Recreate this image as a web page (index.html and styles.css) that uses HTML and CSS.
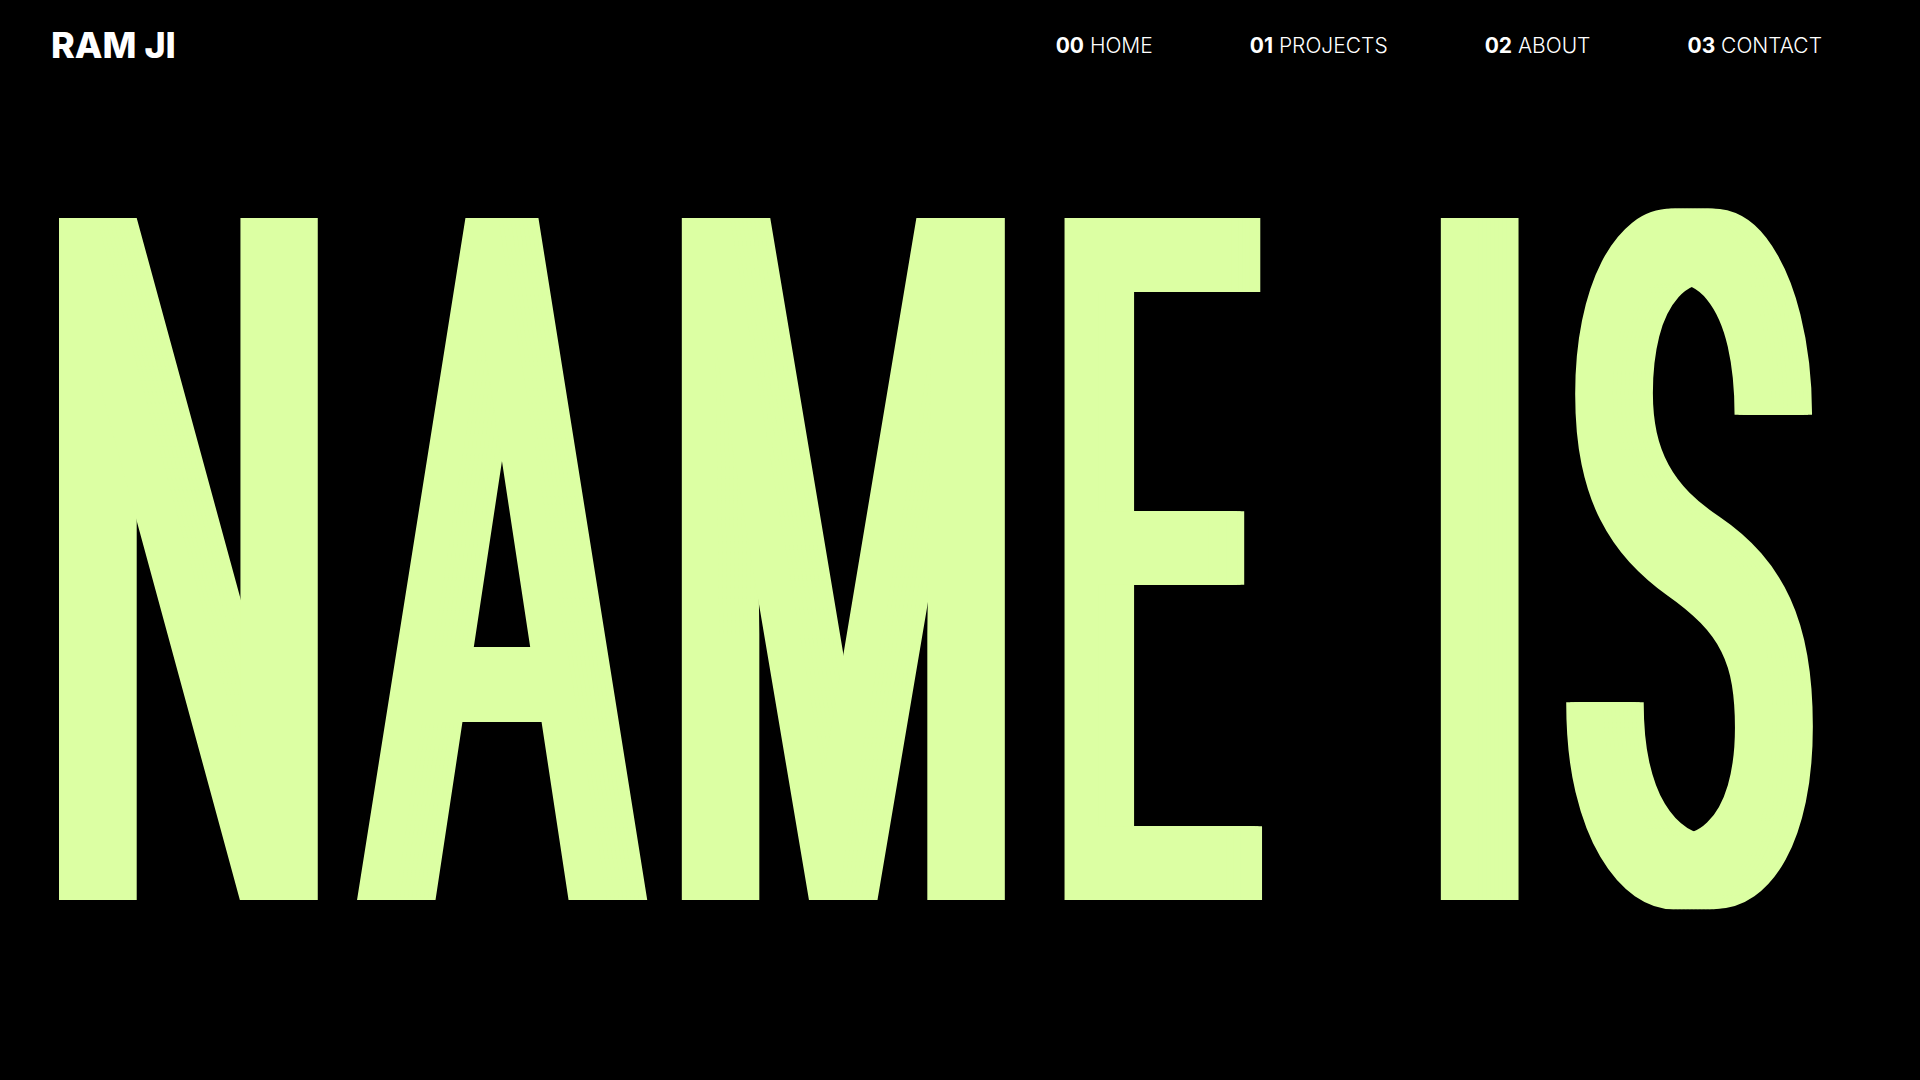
FILE: index.html
```html
<!DOCTYPE html>
<html lang="en">
<head>
<meta charset="utf-8">
<title>Ram Ji</title>
<link rel="stylesheet" href="styles.css">
</head>
<body>
<header class="topbar">
  <a class="logo" href="#">RAM JI</a>
  <nav class="nav">
    <a class="nav-link" href="#"><span class="nav-num">00</span> HOME</a>
    <a class="nav-link" href="#"><span class="nav-num">01</span> PROJECTS</a>
    <a class="nav-link" href="#"><span class="nav-num">02</span> ABOUT</a>
    <a class="nav-link" href="#"><span class="nav-num">03</span> CONTACT</a>
  </nav>
</header>
<main class="hero">
  <h1 class="hero-title">NAM<span class="hero-narrow">E</span> IS</h1>
</main>
</body>
</html>
```
FILE: styles.css
```css
html, body {
  margin: 0;
  padding: 0;
  background: #000;
}

body {
  height: 100vh;
  display: flex;
  flex-direction: column;
  overflow: hidden;
}

.topbar {
  display: flex;
  justify-content: space-between;
  align-items: flex-start;
  padding: 27px 98px 0 51px;
}

.logo {
  font-family: Inter, "Liberation Sans", sans-serif;
  font-weight: 800;
  font-size: 36px;
  line-height: 1;
  color: #fff;
  text-decoration: none;
}

.nav {
  display: flex;
  gap: 97px;
  margin-top: 8px;
}

.nav-link {
  font-family: Inter, "Liberation Sans", sans-serif;
  font-weight: 300;
  font-size: 21px;
  line-height: 1;
  color: #fff;
  text-decoration: none;
}

.nav-num {
  font-weight: 700;
}

.hero {
  flex: 1;
  min-height: 0;
  display: flex;
  align-items: flex-end;
  padding: 0 0 115px 26px;
  overflow: hidden;
}

.hero-title {
  margin: 0;
  font-family: Roboto, "Liberation Sans", sans-serif;
  font-weight: 400;
  font-size: 400px;
  line-height: 1;
  letter-spacing: 36.5px;
  word-spacing: -12px;
  white-space: nowrap;
  color: #dcffa3;
  transform: scaleY(2.398);
  transform-origin: 0 84.2%;
  text-shadow:
    4px 0 #dcffa3, 8px 0 #dcffa3, 12px 0 #dcffa3, 16px 0 #dcffa3,
    20px 0 #dcffa3, 24px 0 #dcffa3, 28px 0 #dcffa3, 32px 0 #dcffa3,
    36px 0 #dcffa3, 40px 0 #dcffa3;
}

.hero-narrow {
  display: inline-block;
  transform: scaleX(0.895);
  transform-origin: 0 0;
  margin-right: -17px;
}
```
